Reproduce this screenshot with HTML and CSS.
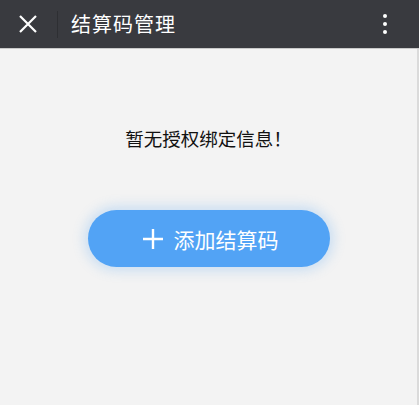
FILE: index.html
```html
<!DOCTYPE html>
<html lang="zh-CN">
<head>
<meta charset="utf-8">
<title>结算码管理</title>
<link rel="stylesheet" href="styles.css">
</head>
<body>
<div class="app">
  <header class="topbar">
    <button class="close" aria-label="关闭">
      <svg width="20" height="20" viewBox="0 0 20 20"><path d="M2 2 L18 18 M18 2 L2 18" stroke="#fff" stroke-width="2.2" fill="none"/></svg>
    </button>
    <span class="divider"></span>
    <h1 class="title">结算码管理</h1>
    <button class="more" aria-label="更多">
      <span class="dot"></span><span class="dot"></span><span class="dot"></span>
    </button>
  </header>
  <main class="content">
    <p class="empty">暂无授权绑定信息！</p>
    <button class="add">
      <svg class="plus" width="20" height="20" viewBox="0 0 20 20"><path d="M10 0 V20 M0 10 H20" stroke="#fff" stroke-width="2.4" fill="none"/></svg>
      <span>添加结算码</span>
    </button>
  </main>
</div>
</body>
</html>
```

FILE: styles.css
```css
html, body {
  margin: 0;
  padding: 0;
  height: 100%;
}
body {
  font-family: "Noto Sans CJK SC", "Noto Sans", sans-serif;
  background: #f3f3f3;
}
.app {
  display: flex;
  flex-direction: column;
  height: 100%;
}
.topbar {
  height: 48px;
  background: #393a3f;
  border-bottom: 1px solid #c9c9c9;
  display: flex;
  align-items: center;
  color: #fff;
  flex-shrink: 0;
}
.close {
  background: none;
  border: none;
  padding: 0;
  margin-left: 18px;
  width: 20px;
  height: 20px;
  display: flex;
}
.divider {
  width: 1px;
  height: 27px;
  background: #2e2f33;
  margin-left: 19px;
}
.title {
  margin: 0 0 0 13px;
  font-size: 20px;
  font-weight: normal;
  line-height: 1;
  flex: 1;
  letter-spacing: 1px;
}
.more {
  background: none;
  border: none;
  padding: 0;
  margin-right: 32px;
  display: flex;
  flex-direction: column;
  gap: 4px;
  align-items: center;
}
.dot {
  width: 4px;
  height: 4px;
  border-radius: 50%;
  background: #fff;
}
.content {
  flex: 1;
  display: flex;
  flex-direction: column;
  align-items: center;
  border-right: 2px solid #dadada;
}
.empty {
  margin: 77px 0 0;
  font-size: 18.5px;
  line-height: 24px;
  color: #111;
}
.add {
  margin-top: 60px;
  width: 242px;
  height: 57px;
  border: none;
  border-radius: 29px;
  background: #52a3f5;
  box-shadow: 0 0 12px 4px rgba(82, 163, 245, 0.25);
  display: flex;
  align-items: center;
  justify-content: center;
  gap: 11px;
  color: #fff;
  font-family: "Noto Sans CJK SC", "Noto Sans", sans-serif;
  font-size: 21px;
  padding: 0 0 0 4px;
}
```
